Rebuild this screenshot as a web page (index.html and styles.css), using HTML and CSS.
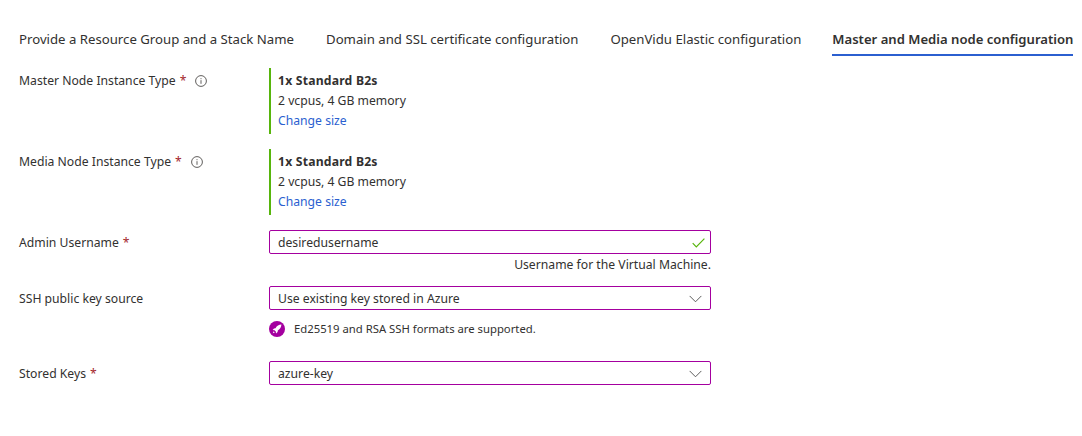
FILE: index.html
```html
<!DOCTYPE html>
<html lang="en">
<head>
    <meta charset="UTF-8">
    <meta name="viewport" content="width=device-width, initial-scale=1.0">
    <title>Master and Media node configuration</title>
    <link rel="stylesheet" href="styles.css">
</head>
<body>
    <nav class="tabs">
        <a class="tab">Provide a Resource Group and a Stack Name</a>
        <a class="tab">Domain and SSL certificate configuration</a>
        <a class="tab">OpenVidu Elastic configuration</a>
        <a class="tab tab-active">Master and Media node configuration</a>
    </nav>

    <div class="form">
        <div class="row row-size">
            <div class="label">Master Node Instance Type <span class="req">*</span>
                <svg class="info" viewBox="0 0 12 12"><circle cx="6" cy="6" r="5.4"/><path d="M6 5.2v3.6M6 3.2v1"/></svg>
            </div>
            <div class="size">
                <div class="size-name">1x Standard B2s</div>
                <div>2 vcpus, 4 GB memory</div>
                <a class="link">Change size</a>
            </div>
        </div>

        <div class="row row-size">
            <div class="label">Media Node Instance Type <span class="req">*</span>
                <svg class="info" viewBox="0 0 12 12"><circle cx="6" cy="6" r="5.4"/><path d="M6 5.2v3.6M6 3.2v1"/></svg>
            </div>
            <div class="size">
                <div class="size-name">1x Standard B2s</div>
                <div>2 vcpus, 4 GB memory</div>
                <a class="link">Change size</a>
            </div>
        </div>

        <div class="row row-user">
            <div class="label">Admin Username <span class="req">*</span></div>
            <div class="field">
                <div class="input">
                    <span>desiredusername</span>
                    <svg class="check" viewBox="0 0 13 10"><path d="M.7 5.2l3.6 3.6L12.4.7"/></svg>
                </div>
                <div class="hint">Username for the Virtual Machine.</div>
            </div>
        </div>

        <div class="row row-ssh">
            <div class="label">SSH public key source</div>
            <div class="field">
                <div class="input">
                    <span>Use existing key stored in Azure</span>
                    <svg class="chevron" viewBox="0 0 14 8"><path d="M.7.7L7 7l6.3-6.3"/></svg>
                </div>
                <div class="note">
                    <svg class="rocket" viewBox="0 0 16 16">
                        <circle cx="8" cy="8" r="8" fill="#a4009f"/>
                        <path d="M12.4 3.6c-2.6.1-4.5 1.3-5.9 3.6L5 7.4 3.6 9l1.9.2 1.3 1.3.2 1.9 1.6-1.4.2-1.5c2.3-1.4 3.5-3.3 3.6-5.9z" fill="#fff"/>
                        <path d="M4.6 10.2l1.2 1.2-2 .8z" fill="#fff"/>
                    </svg>
                    <span>Ed25519 and RSA SSH formats are supported.</span>
                </div>
            </div>
        </div>

        <div class="row">
            <div class="label">Stored Keys <span class="req">*</span></div>
            <div class="field">
                <div class="input">
                    <span>azure-key</span>
                    <svg class="chevron" viewBox="0 0 14 8"><path d="M.7.7L7 7l6.3-6.3"/></svg>
                </div>
            </div>
        </div>
    </div>
</body>
</html>
```

FILE: styles.css
```css
body {
    font-family: "Noto Sans", "Open Sans", Arial, sans-serif;
    font-size: 12.2px;
    line-height: 20px;
    color: #323130;
    background-color: #fff;
    margin: 0;
    padding: 0 9px 0 19px;
}

.tabs {
    display: flex;
    gap: 32px;
    padding-top: 29px;
}

.tab {
    font-size: 13.2px;
    height: 25px;
    line-height: 20px;
    white-space: nowrap;
}

.tab-active {
    font-size: 13.1px;
    font-weight: 600;
    margin-left: -1px;
    border-bottom: 2px solid #2b5fd0;
}

.form {
    padding-top: 12px;
}

.row {
    display: flex;
}

.row-size {
    margin-bottom: 15px;
}

.row-size + .row-user {
    margin-top: 1px;
}

.row-user {
    margin-bottom: 11px;
}

.row-ssh {
    margin-bottom: 22px;
}

.label {
    width: 250px;
    flex: none;
    display: flex;
    align-items: flex-start;
    gap: 4px;
    padding-top: 3px;
    white-space: nowrap;
}

.req {
    color: #a4262c;
}

.info {
    width: 12px;
    height: 12px;
    margin: 4px 0 0 5px;
    fill: none;
    stroke: #605e5c;
    stroke-width: 1;
}

.size {
    box-sizing: border-box;
    border-left: 2px solid #57b50c;
    padding: 3px 0 0 7px;
    height: 66px;
}

.size-name {
    font-weight: 700;
    letter-spacing: 0.2px;
}

.link {
    color: #2b5fd0;
}

.field {
    width: 442px;
}

.input {
    display: flex;
    justify-content: space-between;
    align-items: center;
    box-sizing: border-box;
    height: 24px;
    padding: 2px 8px 0;
    border: 1px solid #a4009f;
    border-radius: 2px;
}

.hint {
    text-align: right;
    line-height: 20px;
    padding-top: 1px;
}

.check {
    width: 13px;
    height: 10px;
    margin-right: -3px;
    fill: none;
    stroke: #57b50c;
    stroke-width: 1.2;
}

.chevron {
    width: 13px;
    height: 8px;
    margin-right: 0;
    fill: none;
    stroke: #505050;
    stroke-width: 1;
}

.note {
    display: flex;
    align-items: center;
    gap: 9px;
    font-size: 11.3px;
    margin-top: 9px;
}

.rocket {
    width: 16px;
    height: 16px;
}
```
